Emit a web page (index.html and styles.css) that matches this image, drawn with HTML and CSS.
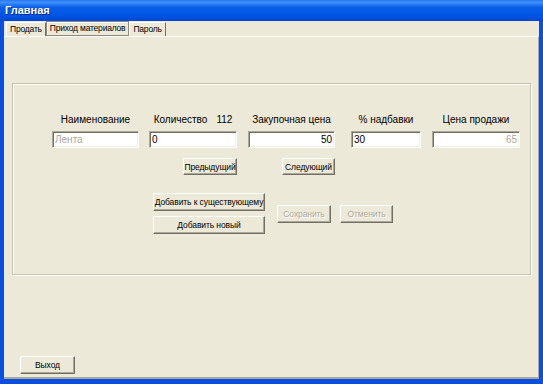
FILE: index.html
```html
<!DOCTYPE html>
<html lang="ru">
<head>
  <meta charset="UTF-8">
  <title>Главная</title>
  <link rel="stylesheet" href="styles.css">
</head>
<body>
  <div class="window">
    <!-- заголовок окна -->
    <div class="titlebar">Главная</div>
    <div class="client">
      <!-- вкладки -->
      <div class="tabs">
        <span class="tab">Продать</span>
        <span class="tab active">Приход материалов</span>
        <span class="tab">Пароль</span>
      </div>
      <div class="panel">
        <div class="group">
          <div class="fields">
            <div class="field w87">
              <label>Наименование</label>
              <input class="edit disabled" type="text" value="Лента" readonly>
            </div>
            <div class="field w88">
              <label><span>Количество</span><span>112</span></label>
              <input class="edit" type="text" value="0">
            </div>
            <div class="field w87">
              <label>Закупочная цена</label>
              <input class="edit right" type="text" value="50">
            </div>
            <div class="field w70">
              <label>% надбавки</label>
              <input class="edit" type="text" value="30">
            </div>
            <div class="field w88">
              <label>Цена продажи</label>
              <input class="edit right disabled" type="text" value="65" readonly>
            </div>
          </div>

          <div class="nav-row">
            <button class="btn b54">Предыдущий</button>
            <button class="btn b53">Следующий</button>
          </div>

          <div class="action-row">
            <div class="stack">
              <button class="btn b112">Добавить к существующему</button>
              <button class="btn b112">Добавить новый</button>
            </div>
            <button class="btn b54 off" disabled>Сохранить</button>
            <button class="btn b53 off" disabled>Отменить</button>
          </div>
        </div>

        <button class="btn exit">Выход</button>
      </div>
    </div>
  </div>
</body>
</html>
```

FILE: styles.css
```css
body { margin: 0; font-family: "Liberation Sans", Arial, sans-serif; font-size: 10px; color: #000; }
.window { width: 543px; height: 384px; display: flex; flex-direction: column; }

/* заголовок */
.titlebar { height: 21px; line-height: 21px; padding-left: 5px; color: #fff; font-weight: bold; font-size: 11px; text-shadow: 1px 1px #0a2a8a;
  background: linear-gradient(#2a78f6, #3d8ff9 12%, #0a5fe8 35%, #0054e3 75%, #0046cf); }
.client { flex: 1; display: flex; flex-direction: column; background: #ece9d8; border: solid #0a4fe0; border-width: 0 4px 5px 4px; }

/* вкладки */
.tabs { height: 15px; display: flex; align-items: flex-end; padding-left: 2px; }
.tab { height: 13px; line-height: 13px; padding: 0 3px; font-size: 8.5px; letter-spacing: -0.2px; white-space: nowrap; border-top: 1px solid #fff; border-left: 1px solid #fff; border-right: 1px solid #716f64; }
.tab.active { border: 1px solid #8c8a7f; box-shadow: inset 1px 1px #fff; }
.panel { flex: 1; display: flex; flex-direction: column; align-items: flex-start; padding: 46px 0 0 8px; border-top: 1px solid #fff; border-right: 1px solid #aca899; border-bottom: 2px solid #aca899; }

/* рамка */
.group { width: 519px; height: 192px; box-sizing: border-box; border: 1px solid #c5c2b2; box-shadow: inset 1px 1px #fff, 1px 1px #fff; padding: 29px 0 0 39px; }
.fields { display: grid; grid-template-columns: 97px 99px 103px 81px 88px; }
.field { display: flex; flex-direction: column; gap: 4px; }
.field label { height: 14px; line-height: 14px; display: flex; justify-content: center; gap: 9px; white-space: nowrap; }
.w87 { width: 87px; }
.w88 { width: 88px; }
.w70 { width: 70px; }

.edit { height: 17px; box-sizing: border-box; margin: 0; padding: 0 2px; font-family: inherit; font-size: 10px; color: #000; background: #fff; outline: none;
  border: 1px solid; border-color: #aca899 #fff #fff #aca899; box-shadow: inset 1px 1px #716f64, inset -1px -1px #f1efe2; }
.edit.right { text-align: right; }
.edit.disabled { color: #aca899; }

/* кнопки */
.btn { height: 18px; box-sizing: border-box; margin: 0; padding: 0; white-space: nowrap; font-family: inherit; font-size: 8.5px; letter-spacing: -0.1px; color: #000; background: #ece9d8;
  border: 1px solid; border-color: #fff #716f64 #716f64 #fff; box-shadow: inset -1px -1px #aca899; }
.btn.off { color: #aca899; text-shadow: 1px 1px #fff; }
.b54 { width: 54px; }
.b53 { width: 53px; }
.b112 { width: 112px; }

.nav-row { display: flex; gap: 45px; margin-top: 10px; padding-left: 131px; }
.nav-row .btn { height: 17px; }
.action-row { display: flex; align-items: center; margin-top: 18px; padding-left: 101px; }
.stack { display: flex; flex-direction: column; gap: 5px; margin-right: 12px; }
.action-row .b54 { margin-right: 9px; }

.exit { width: 55px; margin: 81px 0 0 8px; }
```
